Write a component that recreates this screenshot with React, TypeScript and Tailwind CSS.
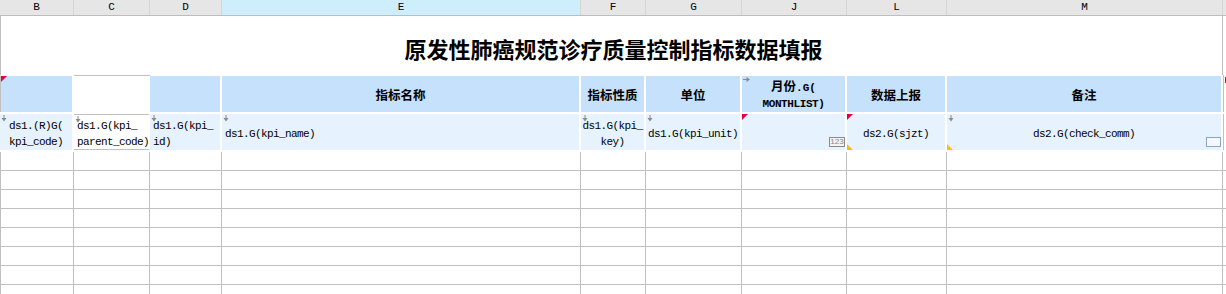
import type { ReactNode } from "react";

const COLS = [
  { key: "B", w: 74 },
  { key: "C", w: 76 },
  { key: "D", w: 72 },
  { key: "E", w: 359 },
  { key: "F", w: 65 },
  { key: "G", w: 96 },
  { key: "J", w: 105 },
  { key: "L", w: 100 },
  { key: "M", w: 276 },
];

const MONO = "font-[family-name:'Liberation_Mono','Noto_Sans_CJK_SC',monospace]";
const CJK = "font-[family-name:'Noto_Sans_CJK_SC','Liberation_Sans',sans-serif]";

function DownArrow() {
  return (
    <svg className="absolute left-[1px] top-[1px]" width="6" height="7" viewBox="0 0 6 7">
      <line x1="3" y1="0" x2="3" y2="4" stroke="#8a8a8a" strokeWidth="1" />
      <polygon points="0.5,3 5.5,3 3,6.5" fill="#8a8a8a" />
    </svg>
  );
}

function RightArrow() {
  return (
    <svg className="absolute left-[1px] top-[1px]" width="7" height="5" viewBox="0 0 7 5">
      <line x1="0" y1="2.5" x2="4" y2="2.5" stroke="#8a8a8a" strokeWidth="1" />
      <polygon points="3.5,0 7,2.5 3.5,5" fill="#8a8a8a" />
    </svg>
  );
}

function RedCorner() {
  return (
    <svg className="absolute left-0 top-0" width="6" height="6" viewBox="0 0 6 6">
      <polygon points="0,0 6,0 0,6" fill="#e8003c" />
    </svg>
  );
}

function YellowCorner() {
  return (
    <svg className="absolute bottom-0 left-0" width="6" height="6" viewBox="0 0 6 6">
      <polygon points="0,0 0,6 6,6" fill="#f5c200" />
    </svg>
  );
}

function DataCell({
  w,
  children,
  align = "center",
  marks,
  white,
}: {
  w: number;
  children?: ReactNode;
  align?: "center" | "left";
  marks?: ReactNode;
  white?: boolean;
}) {
  return (
    <div
      className={`relative flex h-full shrink-0 flex-col justify-center border-r-2 border-white pt-[3px] text-[11px] leading-[16px] tracking-[-0.6px] text-black ${MONO} ${
        white ? "border-y border-y-[#c0c0c0] bg-white" : "bg-[#e6f2fe]"
      } ${align === "center" ? "items-center text-center" : "items-start pl-[3px] text-left"}`}
      style={{ width: w }}
    >
      {marks}
      {children}
    </div>
  );
}

export default function App() {
  return (
    <div className="h-[294px] w-[1226px] overflow-hidden bg-white">
      {/* column letters */}
      <div className="flex h-[16px] border-b border-[#bdbdbd] bg-[#e6e6e6]">
        {COLS.map((c) => (
          <div
            key={c.key}
            className={`flex shrink-0 items-center justify-center border-r border-[#d6d6d6] text-[11px] leading-none text-black ${MONO} ${
              c.key === "E" ? "bg-[#cdeefa]" : ""
            }`}
            style={{ width: c.w }}
          >
            {c.key}
          </div>
        ))}
        <div className="flex-1" />
      </div>

      {/* title */}
      <div className="flex h-[59px]">
        <div className="flex w-[1223px] items-center justify-center border-x border-[#c0c0c0] pl-[4px] pt-[4px]">
          <h1 className={`text-[22px] font-bold leading-none text-black ${CJK}`}>
            原发性肺癌规范诊疗质量控制指标数据填报
          </h1>
        </div>
      </div>

      {/* header row */}
      <div className="flex h-[39px] border-b-2 border-white">
        <div className="relative h-full w-[74px] shrink-0 border-t border-r-2 border-white border-l border-l-[#c0c0c0] bg-[#c5e1fb]">
          <RedCorner />
        </div>
        <div className="h-full w-[76px] shrink-0 border-t border-[#c0c0c0] bg-white" />
        <div className="h-full w-[72px] shrink-0 border-t border-r-2 border-white bg-[#c5e1fb]" />
        {[
          { w: 359, t: "指标名称" },
          { w: 65, t: "指标性质" },
          { w: 96, t: "单位" },
        ].map((h) => (
          <div
            key={h.t}
            className={`flex h-full shrink-0 items-center justify-center border-t border-r-2 border-white bg-[#c5e1fb] pt-[3px] text-[12.5px] font-bold text-black ${CJK}`}
            style={{ width: h.w }}
          >
            {h.t}
          </div>
        ))}
        <div className="relative flex h-full w-[105px] shrink-0 flex-col items-center justify-center border-t border-r-2 border-white bg-[#c5e1fb] pt-[1px] leading-[16px] text-black">
          <RightArrow />
          <span className={`text-[12.5px] font-bold ${CJK}`}>
            月份<span className={`${MONO} text-[11px]`}>.G(</span>
          </span>
          <span className={`text-[11px] font-bold tracking-[-0.4px] ${MONO}`}>MONTHLIST)</span>
        </div>
        {[
          { w: 100, t: "数据上报" },
          { w: 276, t: "备注" },
        ].map((h) => (
          <div
            key={h.t}
            className={`flex h-full shrink-0 items-center justify-center border-t border-r-2 border-white bg-[#c5e1fb] pt-[3px] text-[12.5px] font-bold text-black ${CJK}`}
            style={{ width: h.w }}
          >
            {h.t}
          </div>
        ))}
        <div className="relative flex-1 border-l border-[#c0c0c0]">
          <div className="absolute right-0 top-[2px] h-[6px] w-[1px] bg-[#e8003c]" />
        </div>
      </div>

      {/* data row */}
      <div className="flex h-[38px] border-b-2 border-white">
        <DataCell w={74} marks={<DownArrow />}>
          <span>ds1.(R)G(</span>
          <span>kpi_code)</span>
        </DataCell>
        <DataCell w={76} align="left" white marks={<DownArrow />}>
          <span>ds1.G(kpi_</span>
          <span>parent_code)</span>
        </DataCell>
        <DataCell w={72} align="left" marks={<DownArrow />}>
          <span>ds1.G(kpi_</span>
          <span>id)</span>
        </DataCell>
        <DataCell w={359} align="left" marks={<DownArrow />}>
          <span>ds1.G(kpi_name)</span>
        </DataCell>
        <DataCell w={65} marks={<DownArrow />}>
          <span>ds1.G(kpi_</span>
          <span>key)</span>
        </DataCell>
        <DataCell w={96} marks={<DownArrow />}>
          <span>ds1.G(kpi_unit)</span>
        </DataCell>
        <DataCell
          w={105}
          marks={
            <>
              <RedCorner />
              <div className="absolute bottom-[3px] right-0 flex h-[10px] w-[16px] items-center justify-center border border-[#8a8a8a] bg-[#f3f3f3] font-[family-name:'Liberation_Sans',sans-serif] text-[8px] leading-none tracking-normal text-[#8a8a8a]">
                123
              </div>
            </>
          }
        />
        <DataCell
          w={100}
          marks={
            <>
              <RedCorner />
              <YellowCorner />
            </>
          }
        >
          <span>ds2.G(sjzt)</span>
        </DataCell>
        <DataCell
          w={276}
          marks={
            <>
              <DownArrow />
              <YellowCorner />
              <div className="absolute bottom-[3px] right-0 h-[10px] w-[15px] border border-[#8aa3c8] bg-[#f5f9ff]" />
            </>
          }
        >
          <span>ds2.G(check_comm)</span>
        </DataCell>
        <div className="flex-1 border-l border-[#c0c0c0]" />
      </div>

      {/* empty grid rows */}
      {Array.from({ length: 8 }).map((_, r) => (
        <div key={r} className="flex h-[19px] border-b border-[#c0c0c0]">
          {COLS.map((c, i) => (
            <div
              key={c.key}
              className={`h-full shrink-0 border-r border-[#c0c0c0] ${i === 0 ? "border-l" : ""}`}
              style={{ width: c.w }}
            />
          ))}
          <div className="flex-1" />
        </div>
      ))}
    </div>
  );
}
